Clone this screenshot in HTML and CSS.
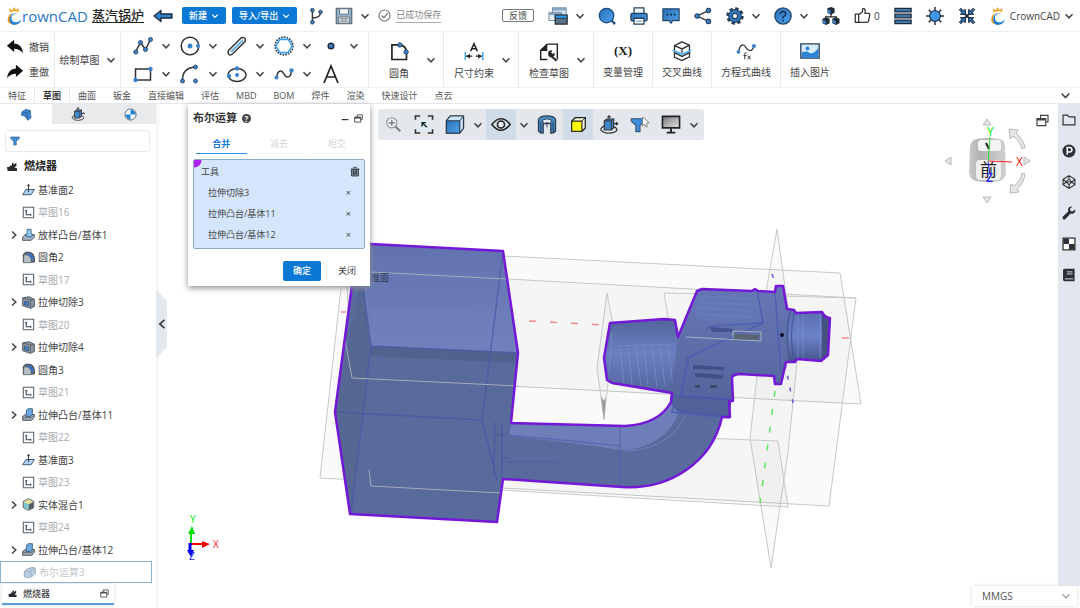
FILE: index.html
```html
<!DOCTYPE html>
<html lang="zh-CN">
<head>
<meta charset="utf-8">
<meta name="viewport" content="width=device-width, initial-scale=1">
<title>CrownCAD - 蒸汽锅炉</title>
<link rel="stylesheet" href="styles.css">
</head>
<body>
<svg class="sprite" width="0" height="0" aria-hidden="true">
  <defs>
    <linearGradient id="gb" x1="0" y1="0" x2="1" y2="1"><stop offset="0" stop-color="#2a6fb8"/><stop offset="1" stop-color="#4ea4ec"/></linearGradient>
    <linearGradient id="gm" x1="0" y1="0" x2="1" y2="1"><stop offset="0" stop-color="#777"/><stop offset="1" stop-color="#e4e4e4"/></linearGradient>
  </defs>
  <symbol id="chev" viewBox="0 0 10 10"><path d="M1.5 3.2 5 6.8l3.500-3.600" fill="none" stroke="currentColor" stroke-width="1.500"/></symbol>
  <symbol id="chevr" viewBox="0 0 10 10"><path d="M3 1.500 6.800 5 3 8.500" fill="none" stroke="currentColor" stroke-width="1.500"/></symbol>
  <symbol id="crown" viewBox="0 0 16 20"><path d="M3 6 2 1.500 5.500 3.500 7.500 0l2 3.300L13 1.500 12.500 5.500Q7 3.500 3 6Z" fill="#f5a52c"/><path d="M12 7Q3 5.500 3 12.500q.5 6.500 6 7Q-.5 20 .5 12.500 2 5 12 7Z" fill="#f59a23"/><path d="M11.500 7.500Q4.500 7 4.500 12.500 5 17 9.500 17q3.500 0 6-3-1.500 6-8 6Q2 19 2.500 12.500 4 6 11.500 7.500Z" fill="#1f7fd6"/></symbol>
  <symbol id="back" viewBox="0 0 20 20"><path d="M1 10 8 4.500V8h11v4H8v3.500Z" fill="#2c83d2" stroke="#1d2733" stroke-width="1.300" stroke-linejoin="round"/></symbol>
  <symbol id="branch" viewBox="0 0 20 20"><path d="M6 4v12M6 12q9 0 9-6" fill="none" stroke="#333" stroke-width="1.600"/><g fill="#3c82c8" stroke="#2b3a4d"><circle cx="6" cy="3.500" r="2"/><circle cx="6" cy="17" r="2"/><circle cx="15" cy="5.500" r="2"/></g></symbol>
  <symbol id="save" viewBox="0 0 20 20"><path d="M1.500 1.500h17v17h-17Z" fill="#8fb2cf" stroke="#66717c" stroke-width="1.600"/><path d="M5 2h10v6H5Z" fill="#eef3f7" stroke="#66717c"/><path d="M4 11h12v7H4Z" fill="#d8e0e6" stroke="#66717c"/><path d="M6 13h8M6 15.500h8" stroke="#66717c"/></symbol>
  <symbol id="check" viewBox="0 0 20 20"><circle cx="10" cy="10" r="8.500" fill="none" stroke="#6d747b" stroke-width="1.700"/><path d="m5.500 10 3.500 3.500 6-7" fill="none" stroke="#6d747b" stroke-width="1.800"/></symbol>
  <symbol id="windows" viewBox="0 0 22 20"><path d="M5 1h15v11H5Z" fill="#d9e6f0" stroke="#68839b"/><path d="M5 1h15v3H5Z" fill="#86a6c3"/><path d="M1 6h14v9H1Z" fill="#e6eef4" stroke="#68839b"/><path d="M1 6h14v3H1Z" fill="#86a6c3"/><path d="M8 9h13v10H8Z" fill="#5d7186" stroke="#27313b" stroke-width="1.500"/><path d="M8 9h13v3.500H8Z" fill="#2f9af0" stroke="#27313b"/></symbol>
  <symbol id="search" viewBox="0 0 20 20"><path d="m15 15 4 4" stroke="#1f4e80" stroke-width="2.500"/><circle cx="9.500" cy="9.500" r="8" fill="url(#gb)" stroke="#1f4e80" stroke-width="1.500"/></symbol>
  <symbol id="print" viewBox="0 0 20 20"><path d="M4.500 1h11v7h-11Z" fill="#eef6fc" stroke="#274059" stroke-width="1.400"/><rect x="1" y="7" width="18" height="8.500" rx="1.500" fill="url(#gb)" stroke="#274059" stroke-width="1.400"/><path d="M4.500 12.500h11V19h-11Z" fill="#fff" stroke="#274059" stroke-width="1.400"/><path d="M6.500 15.700h7" stroke="#3c82c8"/></symbol>
  <symbol id="chat" viewBox="0 0 20 20"><path d="M1 2h18v13h-7l-2 3-2-3H1Z" fill="url(#gb)" stroke="#274a70" stroke-width="1.400"/><path d="M5 8.500h2m2 0h2m2 0h2" stroke="#0e2a48" stroke-width="1.800"/></symbol>
  <symbol id="share" viewBox="0 0 20 20"><path d="M16 4 3.500 10 16 16" fill="none" stroke="#333" stroke-width="1.500"/><g fill="#3c82c8" stroke="#24405e" stroke-width="1.200"><circle cx="16" cy="4" r="2.500"/><circle cx="3.500" cy="10" r="2.500"/><circle cx="16" cy="16" r="2.500"/></g></symbol>
  <symbol id="gear" viewBox="0 0 20 20"><circle cx="10" cy="10" r="8" fill="none" stroke="#263f5a" stroke-width="3.400" stroke-dasharray="3.600 2.683"/><circle cx="10" cy="10" r="7" fill="#2f7fc9" stroke="#263f5a" stroke-width="1.300"/><circle cx="10" cy="10" r="3" fill="#fff" stroke="#263f5a" stroke-width="1.500"/></symbol>
  <symbol id="help" viewBox="0 0 20 20"><circle cx="10" cy="10" r="9" fill="url(#gb)" stroke="#274a70" stroke-width="1.600"/><path d="M7 8q0-3 3-3t3 2.700Q13 9.500 10 11v1.500M10 14v2" fill="none" stroke="#173659" stroke-width="1.700"/></symbol>
  <symbol id="net" viewBox="0 0 20 20"><path d="M10 7v4M4 14v-3h12v3" fill="none" stroke="#222" stroke-width="1.300"/><g fill="#1e2b38"><path d="m10 0 4 1.500v5L10 8.500l-4-2v-5Z"/><path d="m4.500 11.500 4 1.500v5l-4 2-4-2v-5Z"/><path d="m15.500 11.500 4 1.500v5l-4 2-4-2v-5Z"/></g><path d="m6.500 3 3 1v3.500l-3-1.500ZM1 14.500l3 1V19l-3-1.500Zm11 0 3 1V19l-3-1.500Z" fill="#3f8fdc"/></symbol>
  <symbol id="like" viewBox="0 0 20 20"><path d="M1.500 8.500h4V18h-4ZM5.500 9 10 5.500V2.200q2.800-1 3.300 1.800l-.5 3.500h4.500q1.700.5 1.200 2L17 17q-.5 1-2 1H5.500" fill="none" stroke="#333" stroke-width="1.500" stroke-linejoin="round"/></symbol>
  <symbol id="list" viewBox="0 0 20 20"><g fill="#3b75ae" stroke="#1d2a38" stroke-width="1.400"><path d="M1 1.500h18v4H1ZM1 8h18v4H1ZM1 14.500h18v4H1Z"/></g></symbol>
  <symbol id="sun" viewBox="0 0 20 20"><path d="M10 0v20M0 10h20M3 3l14 14M17 3 3 17" stroke="#27313b" stroke-width="1.700"/><circle cx="10" cy="10" r="6" fill="#3f97e8" stroke="#274059" stroke-width="1.400"/></symbol>
  <symbol id="shrink" viewBox="0 0 20 20"><path d="m3 3 14 14M17 3 3 17" stroke="#1c2732" stroke-width="2"/><g fill="#2f6fb0" stroke="#1c2732" stroke-width="1.100" stroke-linejoin="round"><path d="M8.500 8.500 2.500 8 4.500 6.500 1.500 3 3 1.500l3.500 3L8 2.500Z"/><path d="m11.500 8.500 6-.5-2-1.500 3-3.500L17 1.500l-3.500 3-1.500-2Z"/><path d="m8.500 11.500-6 .5 2 1.500-3 3.500L3 18.500l3.500-3 1.500 2Z"/><path d="m11.500 11.500 6 .5-2 1.500 3 3.500-1.500 1.500-3.500-3-1.500 2Z"/></g></symbol>
  <symbol id="undo" viewBox="0 0 20 20"><path d="M1 8.500 9 2v4q9 .5 10 11-4-5-10-5v3.500Z" fill="#111"/></symbol>
  <symbol id="redo" viewBox="0 0 20 20"><path d="M19 8.500 11 2v4Q2 6.500 1 17q4-5 10-5v3.500Z" fill="#111"/></symbol>
  <symbol id="poly" viewBox="0 0 20 20"><path d="m2.500 16 5-9.500 5 7 5-10" fill="none" stroke="#333" stroke-width="1.500"/><g fill="#3c82c8" stroke="#24405e" stroke-width=".8"><circle cx="2.800" cy="16" r="2.100"/><circle cx="7.500" cy="6.500" r="2.100"/><circle cx="12.500" cy="13.500" r="2.100"/><circle cx="17.500" cy="3.500" r="2.100"/></g></symbol>
  <symbol id="circ" viewBox="0 0 20 20"><circle cx="10" cy="10" r="8.800" fill="none" stroke="#333" stroke-width="1.500"/><circle cx="10" cy="10" r="2.500" fill="#3c82c8"/><circle cx="18" cy="10" r="2" fill="#3c82c8"/></symbol>
  <symbol id="slot" viewBox="0 0 20 20"><path d="M1.500 14.500 14 2q2-1.200 3.500 0t.5 3.500L5.500 18q-2 1.500-3.500.5t-.5-4Z" fill="#fff" stroke="#333" stroke-width="1.500"/><path d="M4 16 16 4" stroke="#61b3ee" stroke-width="2"/></symbol>
  <symbol id="hex" viewBox="0 0 20 20"><circle cx="10" cy="10" r="9" fill="#a7d5f7" stroke="#333" stroke-width="1.500" stroke-dasharray="1.500 1.300"/><path d="M6 3.500h8l4 6.500-4 6.500H6L2 10Z" fill="#fff" stroke="#3d9ee8" stroke-width="1.300"/></symbol>
  <symbol id="dot" viewBox="0 0 20 20"><circle cx="10" cy="10" r="2.800" fill="#3c82c8" stroke="#1d2d3d" stroke-width="1.500"/></symbol>
  <symbol id="rect" viewBox="0 0 20 20"><path d="M2.500 5h15v11h-15Z" fill="#fff" stroke="#333" stroke-width="1.500"/><circle cx="17.500" cy="5" r="2.200" fill="#3c82c8"/><circle cx="2.500" cy="16" r="2.200" fill="#3c82c8"/></symbol>
  <symbol id="arc" viewBox="0 0 20 20"><path d="M2.500 17Q2 4 15 3" fill="none" stroke="#333" stroke-width="1.500"/><g fill="#3c82c8" stroke="#24405e" stroke-width=".8"><circle cx="2.500" cy="17" r="2"/><circle cx="15.500" cy="3" r="2"/><circle cx="15.500" cy="17" r="2"/></g></symbol>
  <symbol id="ell" viewBox="0 0 20 20"><ellipse cx="10" cy="11" rx="9" ry="6.500" fill="none" stroke="#333" stroke-width="1.500"/><g fill="#3c82c8"><circle cx="10" cy="11" r="2"/><circle cx="10" cy="4.500" r="2.200"/><circle cx="2" cy="12" r="2.200"/></g></symbol>
  <symbol id="spl" viewBox="0 0 20 20"><path d="M2.500 13.500C4 5 8 6 10 10s6.500 5 7.500-3" fill="none" stroke="#333" stroke-width="1.500"/><circle cx="2.500" cy="13.500" r="2" fill="#3c82c8"/><circle cx="17.500" cy="6.500" r="2.200" fill="#3c82c8"/></symbol>
  <symbol id="txt" viewBox="0 0 20 20"><path d="M3 19 10 2l7 17M5.500 13h9" fill="none" stroke="#222" stroke-width="1.700"/></symbol>
  <symbol id="fil" viewBox="0 0 24 24"><path d="M3.500 3.500H13q7.500 1 8 8.500v9H3.500Z" fill="#fff" stroke="#222" stroke-width="2"/><circle cx="13" cy="3.500" r="2.700" fill="#3c82c8" stroke="#24405e"/><circle cx="20.500" cy="12" r="2.700" fill="#3c82c8" stroke="#24405e"/></symbol>
  <symbol id="dim" viewBox="0 0 24 24"><path d="m8 11 4-9 4 9M9.500 8h5" fill="none" stroke="#222" stroke-width="1.800"/><path d="M2 17h20" stroke="#222" stroke-width="1.500" stroke-dasharray="8 4"/><path d="m3 17 4-3v6ZM21 17l-4-3v6Z" fill="#222"/><path d="M1.500 12v10M22.500 12v10" stroke="#48aef0" stroke-width="1.800"/></symbol>
  <symbol id="chk" viewBox="0 0 24 24"><path d="M10 2.500h12V21M10 2.500 2 10v11h8M2 10h8Z" fill="none" stroke="#222" stroke-width="1.700"/><path d="M10 2v8H2Z" fill="#222"/><path d="M11 14q0-4 4-4l1 .5-1.500 2 2 2 2-1.500q1.500 3-1.500 4.500l5 4-2 2-5-5q-4 0-4-4.500Z" fill="#222"/></symbol>
  <symbol id="iso" viewBox="0 0 24 24"><path d="m12 1 9 4v14l-9 4.500-9-4V5.500ZM3 5.500l9 4 9-4.500M12 9.500V14M3 14l9 4.500 9-4.500" fill="none" stroke="#333" stroke-width="1.600"/><path d="m1 11 11 5L23 11" fill="none" stroke="#48aef0" stroke-width="2"/></symbol>
  <symbol id="wave" viewBox="0 0 24 24"><path d="M3 13C5 3 9 3 12 8s8 5 9.500-2" fill="none" stroke="#333" stroke-width="1.500"/><circle cx="3" cy="13" r="2.300" fill="#3c82c8"/><circle cx="21.500" cy="6" r="2.500" fill="#3c82c8"/><path d="M12.500 14q-2-.5-2 2v6M9 17.500h3.500M14 17.500l3.500 4.500m0-4.500L14 22" fill="none" stroke="#333" stroke-width="1.200"/></symbol>
  <symbol id="pic" viewBox="0 0 24 24"><path d="M1 3.500h22v17H1Z" fill="#d8ecfb" stroke="#274059" stroke-width="1.600"/><path d="M2 14q5-3 9 0 5 3 11-6v12H2Z" fill="#2f83d6"/><circle cx="9" cy="9" r="2.300" fill="#2f83d6"/></symbol>
  <symbol id="part" viewBox="0 0 20 20"><path d="m3 6 6-4 7 2 1 11-5 4-4-6-6-2Z" fill="#3a86cf" stroke="#2c5f92"/><path d="m3 6 7 2 6-4M10 8l2 10" fill="none" stroke="#23507e"/></symbol>
  <symbol id="rot" viewBox="0 0 24 24"><path d="M6 7.500 9 5h9v11l-3 3H6Z" fill="#3f86c6" stroke="#333" stroke-width="1.400"/><path d="M6 7.500h9V19M15 7.500 18 5" fill="none" stroke="#333" stroke-width="1.200"/><path d="M12 5V1m-2 2 2-2 2 2M18 11h5m-2-2 2 2-2 2M6 14q-5 2-4 5 3 4 11 4 8-1 9-4 0-3-4-4" fill="none" stroke="#333" stroke-width="1.500"/></symbol>
  <symbol id="bmw" viewBox="0 0 20 20"><circle cx="10" cy="10" r="8.500" fill="#fff" stroke="#49637d" stroke-width="1.500"/><path d="M10 10V2.500A7.500 7.500 0 0 1 17.500 10ZM10 10v7.500A7.500 7.500 0 0 1 2.500 10Z" fill="#2383d8"/></symbol>
  <symbol id="funnel" viewBox="0 0 20 20"><path d="M1.500 2h17v3l-6 5.500V18h-5v-7.500l-6-5.500Z" fill="#3d8fdb" stroke="#345577" stroke-width="1.300"/></symbol>
  <symbol id="root" viewBox="0 0 20 20"><path d="M1 11h4l2-3h3V4l3-1v4l5-4v6l-4 3 5 1v5H2Z" fill="#26292d"/></symbol>
  <symbol id="plane" viewBox="0 0 20 20"><path d="M6 10h13l-5 8H1Z" fill="#a9d2f2" stroke="#3b5268" stroke-width="1.400"/><path d="M10 14V3M8 5l2-3 2 3" fill="none" stroke="#333" stroke-width="1.400"/></symbol>
  <symbol id="sketch" viewBox="0 0 20 20"><path d="M2 2h16v16H2Z" fill="#fff" stroke="#56606b" stroke-width="1.600"/><path d="M6.500 6v7.500H14M5 7h3m5.500 5v3" fill="none" stroke="#3b4650" stroke-width="1.700"/></symbol>
  <symbol id="boss" viewBox="0 0 20 20"><path d="m1 13 4-3h14v4l-4 5H1Z" fill="#a5aeb8" stroke="#3a4653" stroke-width="1.300"/><path d="M7 3 9.500 1H16v9l-3 3H6Z" fill="#6ba6dc" stroke="#365878" stroke-width="1.300"/><path d="M2 15h12l4-4" fill="none" stroke="#3a4653"/></symbol>
  <symbol id="loft" viewBox="0 0 20 20"><path d="m1 14 4-4h14v4l-5 5H1Z" fill="#a5b4c2" stroke="#3a4653" stroke-width="1.300"/><path d="M8 2h6v5q0 3 3 4l-4 3-8-2q3-2 3-5Z" fill="#8cc7ef" stroke="#365878" stroke-width="1.300"/></symbol>
  <symbol id="fillet" viewBox="0 0 20 20"><path d="M2 5 6 2h6q6 1 7 8v7H2Z" fill="#6c7784" stroke="#2b3540" stroke-width="1.400"/><path d="M9 3q8 1 9 10h-4q0-7-8-8Z" fill="#2e70d0"/><path d="M2.500 6H8q5 1 6 7v5H2.500Z" fill="#b8c0c8" stroke="#4b5662"/></symbol>
  <symbol id="cut" viewBox="0 0 20 20"><path d="m1 3 10-2 8 4v11l-6 3-12-4Z" fill="#8b95a0" stroke="#444e59" stroke-width="1.300"/><path d="m1 3 12 3v13M13 6l6-1" fill="none" stroke="#444e59"/><path d="m4 8 6 1.500v5.500l-6-1.500Z" fill="#3e86d0" stroke="#24435f"/></symbol>
  <symbol id="mix" viewBox="0 0 20 20"><path d="m10 1 8 4v10l-8 4-8-4V5Z" fill="#eadf9e" stroke="#4a5560" stroke-width="1.400"/><path d="m10 10 7-4v9l-7 3Z" fill="#4f5d69"/><path d="m3 6 7 4v8l-7-3Z" fill="#78c8d8"/></symbol>
  <symbol id="bool" viewBox="0 0 20 20"><path d="m2 9 5-5 9-2 3 2v7l-6 6-8 1-3-2Z" fill="#b8cfe6" stroke="#90a0b0" stroke-width="1.300"/><path d="m2 9 10-1 6-5M12 8l1 8" fill="none" stroke="#90a0b0"/></symbol>
  <symbol id="restore" viewBox="0 0 20 20"><path d="M7 7V2h11.500v10H15M1.500 7H15v11H1.500Z" fill="none" stroke="currentColor" stroke-width="1.800"/><path d="M1.500 8.500H15" stroke="currentColor" stroke-width="3"/></symbol>
  <symbol id="trash" viewBox="0 0 20 20"><path d="M3 6h14v13H3Z" fill="#7c8997" stroke="#252c34" stroke-width="1.500"/><path d="M1 5h18M7 4V1.500h6V4M7 8v9m3-9v9m3-9v9" fill="none" stroke="#252c34" stroke-width="1.500"/></symbol>
  <symbol id="zoom" viewBox="0 0 20 20"><circle cx="8" cy="8" r="6" fill="#edf1f5" stroke="#8b939b" stroke-width="1.300"/><path d="m12 12 6 6" stroke="#7a828a" stroke-width="2.400"/><path d="M8 4.500v7M4.500 8h7" stroke="#6b737b" stroke-width="1.500"/></symbol>
  <symbol id="fit" viewBox="0 0 20 20"><path d="M1 5V1h5m8 0h5v4M1 15v4h5m8 0h5v-4" fill="none" stroke="#333" stroke-width="1.700"/><path d="M5 4h10v12H5Z" fill="#dcecf8"/><path d="m13 13-5-5m0 4V8h4" fill="none" stroke="#222" stroke-width="1.500"/></symbol>
  <symbol id="cube" viewBox="0 0 20 20"><path d="m1 6 4-5h14v13l-4 5H1Z" fill="#cde5f6" stroke="#2b3a4d" stroke-width="1.400"/><path d="M1 6h14v13H1Z" fill="url(#gb)" stroke="#2b3a4d" stroke-width="1.200"/><path d="m15 6 4-5" stroke="#2b3a4d"/></symbol>
  <symbol id="ycube" viewBox="0 0 20 20"><path d="m2 6 4-4h12v12l-4 4H2Z" fill="#f4f4d8" stroke="#222" stroke-width="1.500"/><path d="M2 6h12v12H2Z" fill="#ff0" stroke="#222" stroke-width="1.300"/><path d="m14 6 4-4" stroke="#222"/></symbol>
  <symbol id="eye" viewBox="0 0 20 14"><path d="M.8 7Q10-4.500 19.200 7 10 18.500.8 7Z" fill="none" stroke="#222" stroke-width="1.500"/><circle cx="10" cy="7" r="3.500" fill="#eef3f7" stroke="#222" stroke-width="1.600"/></symbol>
  <symbol id="ring" viewBox="0 0 20 20"><path d="M1 5Q2 1 10 1t9 4v12q-2 2.500-5 2V9.500q-4-1.500-8 0V19q-3 .5-5-2Z" fill="#468dc9" stroke="#2b3a4d" stroke-width="1.300"/><path d="M5 5.500Q10 2.500 15 5.500L13.500 9q-3.500-1.500-7 0Z" fill="#e2edf5" stroke="#2b3a4d"/><path d="M3.500 7v11M16.500 7v11M10 8v5" stroke="#2b3a4d"/></symbol>
  <symbol id="fcur" viewBox="0 0 24 20"><path d="M1.500 3h16v3l-5.500 5v7.500H7V11L1.500 6Z" fill="#3d8fdb" stroke="#345577" stroke-width="1.300"/><path d="m15 1 8 7-3.500.5 1.500 4-2 .5-1.500-3.500L15 12Z" fill="#fff" stroke="#777"/></symbol>
  <symbol id="mon" viewBox="0 0 20 20"><path d="M1 1.500h18v12H1Z" fill="url(#gm)" stroke="#222" stroke-width="1.700"/><path d="M10 14v4M5.500 18.500h9" stroke="#222" stroke-width="2"/></symbol>
  <symbol id="folder" viewBox="0 0 20 20"><path d="M1.500 3h6.500l2 2.500h8.500V17h-17Z" fill="none" stroke="#333" stroke-width="1.700" stroke-linejoin="round"/></symbol>
  <symbol id="park" viewBox="0 0 20 20"><circle cx="10" cy="10" r="9.300" fill="#2c3036"/><path d="M7.500 15.500V5h3.700q3 .3 3 3.200t-3 3.200H7.500" fill="none" stroke="#fff" stroke-width="2.200"/></symbol>
  <symbol id="poly3" viewBox="0 0 20 20"><path d="m10 1 8.500 5v8L10 19l-8.500-5V6ZM10 1v5M10 14v5M1.500 6 6 10l-4.500 4M18.500 6 14 10l4.500 4M10 6l4 4-4 4-4-4Zm-4 4h8" fill="none" stroke="#333" stroke-width="1.500"/></symbol>
  <symbol id="wrench" viewBox="0 0 20 20"><path d="M18.500 5 15 8l-3-1-.5-3L15 .8Q9.500.3 8.500 5l.3 3L1 15.500Q0 18 2 19.200q1.800.6 3-.7l7-7.500q6 .5 7-4Z" fill="#2c3036"/></symbol>
  <symbol id="checker" viewBox="0 0 20 20"><path d="M1.500 1.500h17v17h-17Z" fill="#fff" stroke="#333" stroke-width="1.800"/><path d="M2 2h8v8H2ZM10 10h8v8h-8Z" fill="#2c3036"/></symbol>
  <symbol id="book" viewBox="0 0 20 20"><path d="M4 1h14v18H4q-3 0-2.500-4V3Q2 1 4 1Z" fill="#2c3036"/><path d="M7 5.500h8M7 8.500h8M4 15.500h12" fill="none" stroke="#e2e6ee" stroke-width="1.300"/></symbol>
</svg>

<div class="app">
  <header class="topbar">
    <div class="topbar-left">
      <a class="brand" href="#" aria-label="CrownCAD"><svg class="brand-mark"><use href="#crown"/></svg><span>rownCAD</span></a>
      <h1 class="doc-title">蒸汽锅炉</h1>
      <button class="ib ib-wide" aria-label="返回"><svg><use href="#back"/></svg></button>
      <div class="primary-group">
        <button class="primary">新建<svg class="chev"><use href="#chev"/></svg></button>
        <button class="primary">导入/导出<svg class="chev"><use href="#chev"/></svg></button>
      </div>
      <button class="ib ib-branch" aria-label="分支"><svg><use href="#branch"/></svg></button>
      <div class="pair"><button class="ib" aria-label="保存"><svg><use href="#save"/></svg></button><button class="cb" aria-label="保存选项"><svg class="chev"><use href="#chev"/></svg></button></div>
      <div class="saved"><svg><use href="#check"/></svg><span>已成功保存</span></div>
    </div>
    <div class="topbar-right">
      <button class="feedback">反馈</button>
      <div class="pair"><button class="ib ib-wide" aria-label="窗口"><svg><use href="#windows"/></svg></button><button class="cb" aria-label="窗口选项"><svg class="chev"><use href="#chev"/></svg></button></div>
      <button class="ib" aria-label="搜索"><svg><use href="#search"/></svg></button>
      <button class="ib" aria-label="打印"><svg><use href="#print"/></svg></button>
      <button class="ib" aria-label="消息"><svg><use href="#chat"/></svg></button>
      <button class="ib" aria-label="分享"><svg><use href="#share"/></svg></button>
      <div class="pair"><button class="ib" aria-label="设置"><svg><use href="#gear"/></svg></button><button class="cb" aria-label="设置选项"><svg class="chev"><use href="#chev"/></svg></button></div>
      <div class="pair"><button class="ib" aria-label="帮助"><svg><use href="#help"/></svg></button><button class="cb" aria-label="帮助选项"><svg class="chev"><use href="#chev"/></svg></button></div>
      <button class="ib" aria-label="结构"><svg><use href="#net"/></svg></button>
      <button class="like" aria-label="点赞"><svg><use href="#like"/></svg><span>0</span></button>
      <button class="ib" aria-label="列表"><svg><use href="#list"/></svg></button>
      <button class="ib" aria-label="主题"><svg><use href="#sun"/></svg></button>
      <button class="ib" aria-label="收缩"><svg><use href="#shrink"/></svg></button>
      <button class="user"><svg class="user-mark"><use href="#crown"/></svg>CrownCAD<svg class="chev"><use href="#chev"/></svg></button>
    </div>
  </header>

  <div class="ribbon">
    <div class="history">
      <button><svg><use href="#undo"/></svg>撤销</button>
      <button><svg><use href="#redo"/></svg>重做</button>
    </div>
    <button class="draw-sketch">绘制草图<svg class="chev"><use href="#chev"/></svg></button>
    <div class="tools">
      <div class="tool"><button aria-label="折线"><svg><use href="#poly"/></svg></button><button class="cb" aria-label="折线选项"><svg class="chev"><use href="#chev"/></svg></button></div>
      <div class="tool"><button aria-label="圆"><svg><use href="#circ"/></svg></button><button class="cb" aria-label="圆选项"><svg class="chev"><use href="#chev"/></svg></button></div>
      <div class="tool"><button aria-label="槽口"><svg><use href="#slot"/></svg></button><button class="cb" aria-label="槽口选项"><svg class="chev"><use href="#chev"/></svg></button></div>
      <div class="tool"><button aria-label="多边形"><svg><use href="#hex"/></svg></button><button class="cb" aria-label="多边形选项"><svg class="chev"><use href="#chev"/></svg></button></div>
      <div class="tool"><button aria-label="点"><svg><use href="#dot"/></svg></button><button class="cb" aria-label="点选项"><svg class="chev"><use href="#chev"/></svg></button></div>
      <div class="tool"><button aria-label="矩形"><svg><use href="#rect"/></svg></button><button class="cb" aria-label="矩形选项"><svg class="chev"><use href="#chev"/></svg></button></div>
      <div class="tool"><button aria-label="圆弧"><svg><use href="#arc"/></svg></button><button class="cb" aria-label="圆弧选项"><svg class="chev"><use href="#chev"/></svg></button></div>
      <div class="tool"><button aria-label="椭圆"><svg><use href="#ell"/></svg></button><button class="cb" aria-label="椭圆选项"><svg class="chev"><use href="#chev"/></svg></button></div>
      <div class="tool"><button aria-label="样条"><svg><use href="#spl"/></svg></button><button class="cb" aria-label="样条选项"><svg class="chev"><use href="#chev"/></svg></button></div>
      <div class="tool"><button aria-label="文字"><svg><use href="#txt"/></svg></button></div>
    </div>
    <div class="cmd cmd-menu"><button class="cmd-btn"><svg><use href="#fil"/></svg>圆角</button><button class="cb" aria-label="圆角选项"><svg class="chev"><use href="#chev"/></svg></button></div>
    <div class="cmd cmd-menu"><button class="cmd-btn"><svg><use href="#dim"/></svg>尺寸约束</button><button class="cb" aria-label="尺寸约束选项"><svg class="chev"><use href="#chev"/></svg></button></div>
    <div class="cmd cmd-menu"><button class="cmd-btn"><svg><use href="#chk"/></svg>检查草图</button><button class="cb" aria-label="检查草图选项"><svg class="chev"><use href="#chev"/></svg></button></div>
    <div class="cmd"><button class="cmd-btn"><span class="var-mark">(X)</span>变量管理</button></div>
    <div class="cmd"><button class="cmd-btn"><svg><use href="#iso"/></svg>交叉曲线</button></div>
    <div class="cmd"><button class="cmd-btn"><svg><use href="#wave"/></svg>方程式曲线</button></div>
    <div class="cmd cmd-last"><button class="cmd-btn"><svg><use href="#pic"/></svg>插入图片</button></div>
  </div>

  <nav class="tabs">
    <button>特征</button><button class="on">草图</button><button>曲面</button><button>钣金</button><button>直接编辑</button><button>评估</button><button>MBD</button><button>BOM</button><button>焊件</button><button>渲染</button><button>快速设计</button><button>点云</button>
    <button class="fold" aria-label="折叠"><svg class="chev"><use href="#chev"/></svg></button>
  </nav>

  <main class="workspace">
    <aside class="side">
      <div class="side-tabs">
        <button class="on" aria-label="特征树"><svg><use href="#part"/></svg></button>
        <button aria-label="视图"><svg class="lg"><use href="#rot"/></svg></button>
        <button aria-label="外观"><svg><use href="#bmw"/></svg></button>
      </div>
      <label class="filter"><svg><use href="#funnel"/></svg><input type="text" aria-label="筛选"></label>
      <div class="root"><svg><use href="#root"/></svg>燃烧器</div>
      <ul class="tree">
        <li><svg><use href="#plane"/></svg>基准面2</li>
        <li class="dim"><svg><use href="#sketch"/></svg>草图16</li>
        <li><button aria-label="展开"><svg><use href="#chevr"/></svg></button><svg><use href="#loft"/></svg>放样凸台/基体1</li>
        <li><svg><use href="#fillet"/></svg>圆角2</li>
        <li class="dim"><svg><use href="#sketch"/></svg>草图17</li>
        <li><button aria-label="展开"><svg><use href="#chevr"/></svg></button><svg><use href="#cut"/></svg>拉伸切除3</li>
        <li class="dim"><svg><use href="#sketch"/></svg>草图20</li>
        <li><button aria-label="展开"><svg><use href="#chevr"/></svg></button><svg><use href="#cut"/></svg>拉伸切除4</li>
        <li><svg><use href="#fillet"/></svg>圆角3</li>
        <li class="dim"><svg><use href="#sketch"/></svg>草图21</li>
        <li><button aria-label="展开"><svg><use href="#chevr"/></svg></button><svg><use href="#boss"/></svg>拉伸凸台/基体11</li>
        <li class="dim"><svg><use href="#sketch"/></svg>草图22</li>
        <li><svg><use href="#plane"/></svg>基准面3</li>
        <li class="dim"><svg><use href="#sketch"/></svg>草图23</li>
        <li><button aria-label="展开"><svg><use href="#chevr"/></svg></button><svg><use href="#mix"/></svg>实体混合1</li>
        <li class="dim"><svg><use href="#sketch"/></svg>草图24</li>
        <li><button aria-label="展开"><svg><use href="#chevr"/></svg></button><svg><use href="#boss"/></svg>拉伸凸台/基体12</li>
        <li class="picked"><svg><use href="#bool"/></svg>布尔运算3</li>
      </ul>
      <button class="doc-tab"><svg><use href="#root"/></svg>燃烧器<svg class="doc-restore"><use href="#restore"/></svg></button>
    </aside>

    <section class="viewport">
      <svg class="scene" viewBox="156 104 902 504" role="img" aria-label="燃烧器模型">
        <defs>
          <linearGradient id="face" x1="0" y1="0" x2="0" y2="1"><stop offset="0" stop-color="#6272ae"/><stop offset="1" stop-color="#7082be"/></linearGradient>
          <linearGradient id="head" x1="0" y1="0" x2="0" y2="1"><stop offset="0" stop-color="#6677b5"/><stop offset=".6" stop-color="#5a6ba5"/><stop offset="1" stop-color="#51629a"/></linearGradient>
          <linearGradient id="cone" x1="0" y1="0" x2="0" y2="1"><stop offset="0" stop-color="#52649c"/><stop offset=".45" stop-color="#6b7fc0"/><stop offset="1" stop-color="#53659f"/></linearGradient>
          <linearGradient id="nose" x1="0" y1="0" x2="0" y2="1"><stop offset="0" stop-color="#5a6db0"/><stop offset=".5" stop-color="#6c82c8"/><stop offset="1" stop-color="#46558c"/></linearGradient>
          <linearGradient id="viewcube" x1="0" y1="0" x2="1" y2="0"><stop offset="0" stop-color="#c9c9c9"/><stop offset=".3" stop-color="#b2b2b2"/><stop offset="1" stop-color="#d0d0d0"/></linearGradient>
          <path id="hull" d="m371 244 132 7 15 102-7 70 114 3Q659 424 671 402l1-9-60-10-5-3-3-22 6-35 54-4 11 1 3 17 19-46 5-2 50 2 3-2 3 2 17 1 1-6h7l4 23 7 1 2 3 26-1 3 5 5 1-2 37-7 6-24-2-2 3h-9l-5 22h-6l-1-8-34-2q-8 0-8 4l1 23h-4l1 16h-8C712 462 670 490 622 487l-119-8-6 43-147-8-15-102 17-127 3-42Z"/>
        </defs>
        <g fill="#777" fill-opacity=".035" stroke="#c6c9c6" stroke-width="1">
          <path d="M345 248 840 273l21 131L352 378Z"/>
          <path d="m343 270 513 28-27 208-509-28Z"/>
          <path d="m664 293 192 5M664 293l10 60"/>
          <path d="m777 229 10 73 10 60-9 90-17 116-21-130 7-62 10-90Z"/>
          <path d="m500 430 278 11 10 66-288-17Z"/>
          <path d="m607 293-10 75 7 52 10-90Z"/>
        </g>
        <path d="m500 425 125 3Q659 424 671 402l1-9-60-10Z" fill="none"/>
        <path d="m604 420-3-24 3 5 2-5Z" fill="#999"/>
        <g fill="none" stroke-width="1.500">
          <path d="m529 321 75 4" stroke="#f38b8b" stroke-dasharray="7 14"/><path d="M341 312h5m496 26h7" stroke="#f38b8b"/>
          <path d="m775 391-15 112" stroke="#5ce65c" stroke-dasharray="6 12"/>
          <path d="m772 274 2 5m11 85 8 39" stroke="#5a5ae0" stroke-dasharray="4 8"/>
        </g>
        <use href="#hull" fill="#596a9d"/>
        <path d="M496 424 625 426Q659 424 671 402l9 8Q668 444 628 450L496 434Z" fill="#6d7eb9"/>
        <path d="M570 441 628 451q46-3 60-42" fill="none" stroke="#7080ba"/>
        <path d="M496 434q70 6 124 12M620 427v60M498 462h60" fill="none" stroke="#4b5cab" stroke-width="1.200" opacity=".7"/>
        <path d="m351 243 152 8 15 102-7 70-8 56-6 43-147-8-15-102 16-126Z" fill="#596a9d"/>
        <path d="m356 243 147 8 15 102-147-7Z" fill="url(#face)"/>
        <path d="m370 308 143 4 5 41-147-7Z" fill="#6f80bd" opacity=".8"/>
        <path d="m362 272 8 74-9 76-10 92-16-102Z" fill="#55668f" opacity=".7"/>
        <path d="m371 346 147 7-1 10-147-7Z" fill="#51628f"/>
        <path d="m361 272 10 74-9 75-11 92m20-167 147 7M335 412l147 8 15 60m6-229-21 169m13 2-1 52m8-52v56m-2-20h10m-14-23h9" fill="none" stroke="#4658a4" stroke-width="1.500" opacity=".7"/>
        <path d="m371 272 135 7M345 340l7 38 166 8M369 470l2 16 129 7" fill="none" stroke="#a5adb5" stroke-width="1"/>
        <text class="plane-label" x="362" y="281">基准面</text>
        <path d="m610 323 54-4 11 1 3 17v55l-4 1-62-10-5-3-3-22Z" fill="url(#cone)"/>
        <path d="m620 349 4 34m4-34 4 36m4-37 5 38m3-38 4 39m4-41 5 41m3-42 5 41m3-42 5 42M612 332l-3 40" fill="none" stroke="#8596cf" opacity=".5"/>
        <path d="m614 346 60-2" stroke="#7386c2"/>
        <path d="m678 337 19-46 5-2 50 2h6l17 2 1-7h7l4 23 7 1-9 52-4 22-6-1-1-7-34-2-8 4 1 23-4 0 1 16-53-6-7-9Z" fill="url(#head)"/>
        <path d="m702 290 50 2 8 8 1 22-20 1-42-3-7-4Z" fill="#6475b3"/>
        <path d="m700 296 56 3m-58 3 56 3m-58 3 57 3m-58 3 57 3" stroke="#7183c0" stroke-width="2" opacity=".4"/>
        <path d="m757 290 6 33-74 34-9 39 52 3m-55-3-5 16 58 6M688 357l-8 45m82-79-51 3-4 3M775 292l6 80" fill="none" stroke="#4a5ab5" stroke-width="1.500" opacity=".8"/>
        <path d="m710 327 24 2-2 3h-20Z" fill="#43548e"/><path d="m693 365 31 2v3l-31-1Zm2 8 28 2v4l-28-2Z" fill="#3f5085"/><path d="M695 385h5v3h-5m15-3h7v3h-7" fill="#3e4a6b"/>
        <path d="m686 337 75 4v-9l-28-1v7" fill="none" stroke="#a9b0ba"/><path d="m734 334 25 1v5l-25-1Z" fill="#596472"/>
        <path d="m674 396 57 4-2 16-51-5-7-8Z" fill="#51629a" stroke="#4658a4"/>
        <path d="m790 310 6 3 26-1 3 5 5 1-2 37-7 6-24-2-4 3-5-1Z" fill="url(#nose)"/><path d="m822 312 8 6-2 37-6 5Z" fill="#43527f"/><path d="M798 314v44m5-44v44m17-43v43" stroke="#8496d0" opacity=".6"/>
        <path d="M790 312q-6 24 0 48M794 312q-5 24 0 49" fill="none" stroke="#43538c"/>
        <circle cx="782" cy="335" r="2" fill="#080c24"/>
        <use href="#hull" fill="none" stroke="#7418d8" stroke-width="2.500" stroke-linejoin="round"/>
        <g stroke-width="2"><path d="M191 544V532" stroke="#0d0"/><path d="m188 534 4-8 3 8Z" fill="#0d0"/><path d="M191 544h12" stroke="#e00"/><path d="m202 541 8 3-8 4Z" fill="#e00"/><path d="M190 543v10" stroke="#00e" stroke-width="3"/><path d="m187 550 4 7 3-7Z" fill="#00e"/></g>
        <g class="axis"><text x="190" y="523" fill="#0e0">Y</text><text x="213" y="548" fill="#f11">X</text><text x="189" y="560" fill="#22e">Z</text></g>
        <g fill="#e6e6e6" stroke="#b9b9b9"><path d="m987 119 4 6h-8Z"/><path d="m987 203 4-6h-8Z"/><path d="m945 161 6-4v8Z"/><path d="m1030 161-6-4v8Z"/><path d="m1009 129 9 1-2 3q8 7 9 15l-3 1q-2-8-9-13l-3 3Z"/><path d="m1010 193 1-9 3 2q7-5 8-13l3 1q-1 9-8 15l2 3Z"/></g>
        <path d="M977 139q10-2 22 0 6 1 6 7l1 27q-1 7-7 8-11 2-22 0-7-1-8-8l1-27q1-6 7-7Z" fill="url(#viewcube)"/>
        <rect x="978" y="140" width="23" height="11" rx="3" fill="#f3f3f3"/>
        <rect x="976" y="160" width="25" height="20" rx="4" fill="#efefef"/>
        <path d="m986 143 3 6" stroke="#222" stroke-width="2"/>
        <text class="cube-face" x="980" y="176">前</text>
        <path d="m988 162 2-25" stroke="#2ddf2d"/><path d="m988 161 24 1" stroke="#f22"/><path d="m988 162 2 12" stroke="#22f"/>
        <g class="axis axis-lg"><text x="987" y="136" fill="#0e0">Y</text><text x="1016" y="166" fill="#f11">X</text><text class="axis-z" x="986" y="182" fill="#22e">Z</text></g>
      </svg>

      <button class="collapse" aria-label="收起侧栏"><svg><use href="#chevr"/></svg></button>

      <div class="viewbar">
        <button aria-label="缩放"><svg><use href="#zoom"/></svg></button>
        <button aria-label="适合窗口"><svg class="lg"><use href="#fit"/></svg></button>
        <button aria-label="显示样式"><svg class="lg"><use href="#cube"/></svg></button>
        <button class="cb" aria-label="显示样式选项"><svg class="chev"><use href="#chev"/></svg></button>
        <button class="on" aria-label="可见性"><svg class="lg"><use href="#eye"/></svg></button>
        <button class="cb" aria-label="可见性选项"><svg class="chev"><use href="#chev"/></svg></button>
        <button aria-label="剖切"><svg class="lg"><use href="#ring"/></svg></button>
        <button class="on" aria-label="着色"><svg><use href="#ycube"/></svg></button>
        <button aria-label="旋转"><svg class="lg"><use href="#rot"/></svg></button>
        <button aria-label="选择过滤"><svg class="lg"><use href="#fcur"/></svg></button>
        <button aria-label="显示器"><svg class="lg"><use href="#mon"/></svg></button>
        <button class="cb" aria-label="显示器选项"><svg class="chev"><use href="#chev"/></svg></button>
      </div>

      <button class="pop" aria-label="还原窗口"><svg><use href="#restore"/></svg></button>

      <form class="dialog" role="dialog" aria-labelledby="dlg">
        <div class="dialog-head"><h2 id="dlg">布尔运算</h2><span class="qm">?</span><button type="button" class="min" aria-label="最小化">–</button><button type="button" aria-label="弹出"><svg><use href="#restore"/></svg></button></div>
        <div class="dialog-tabs"><button type="button" class="on">合并</button><button type="button" disabled>减去</button><button type="button" disabled>相交</button></div>
        <div class="picks">
          <div class="picks-head"><span>工具</span><button type="button" aria-label="清空"><svg><use href="#trash"/></svg></button></div>
          <ul>
            <li>拉伸切除3<button type="button" aria-label="移除">×</button></li>
            <li>拉伸凸台/基体11<button type="button" aria-label="移除">×</button></li>
            <li>拉伸凸台/基体12<button type="button" aria-label="移除">×</button></li>
          </ul>
        </div>
        <div class="dialog-foot"><button type="button" class="ok">确定</button><button type="button">关闭</button></div>
      </form>
    </section>

    <nav class="rail">
      <button aria-label="文件"><svg><use href="#folder"/></svg></button>
      <button aria-label="属性"><svg><use href="#park"/></svg></button>
      <button aria-label="模型"><svg><use href="#poly3"/></svg></button>
      <button aria-label="工具"><svg><use href="#wrench"/></svg></button>
      <button aria-label="材质"><svg><use href="#checker"/></svg></button>
      <button aria-label="手册"><svg><use href="#book"/></svg></button>
    </nav>
    <div class="units"><select aria-label="单位"><option>MMGS</option></select><svg class="chev"><use href="#chev"/></svg></div>
  </main>
</div>
</body>
</html>
```
FILE: styles.css
```css
* { box-sizing: border-box; }
body { margin: 0; background: #fff; color: #444; font: 10px/14px "Open Sans", "Noto Sans CJK SC", sans-serif; }
button { display: flex; align-items: center; justify-content: center; padding: 0; border: 0; background: none; color: inherit; font: inherit; white-space: nowrap; }
ul { margin: 0; padding: 0; list-style: none; }
h1, h2 { margin: 0; }
svg { display: block; flex: none; }
.sprite { position: absolute; }
.chev { width: 10px; height: 10px; color: #444; }
.app { display: flex; flex-direction: column; min-height: 100vh; }

/* Top bar */
.topbar { display: flex; justify-content: space-between; height: 32px; padding: 0 6px 0 7px; border-bottom: 1px solid #eef0f2; }
.topbar-left, .topbar-right, .pair, .primary-group, .saved, .like, .user { display: flex; align-items: center; }
.topbar-left { gap: 9px; }
.topbar-right { gap: 14px; }
.brand { display: flex; align-items: center; width: 76px; color: #2a78c4; font-size: 15px; line-height: 20px; text-decoration: none; }
.brand-mark { width: 15px; height: 18px; }
.doc-title { color: #222; font-size: 13px; font-weight: 500; line-height: 17px; text-decoration: underline; text-underline-offset: 2px; }
.ib svg { width: 18px; height: 18px; }
.ib-wide svg { width: 20px; height: 20px; }
.ib-branch { width: 20px; }
.pair { gap: 7px; }
.pair .cb { width: 9px; }
.primary-group { gap: 6px; }
.primary { gap: 4px; height: 17px; padding: 0 7px; border-radius: 2px; background: #0b78d6; color: #fff; font-size: 9px; font-weight: 500; }
.primary .chev { width: 8px; height: 8px; color: #fff; }
.saved { gap: 5px; color: #888; font-size: 9px; }
.saved svg { width: 13px; height: 13px; }
.saved span { border-bottom: 1px solid #aaa; }
.feedback { width: 32px; height: 13px; border: 1px solid #777; border-radius: 2px; font-size: 9px; line-height: 11px; }
.like { gap: 3px; }
.like svg { width: 17px; height: 17px; }
.user { gap: 4px; }
.user-mark { width: 16px; height: 18px; }

/* Ribbon */
.ribbon { display: flex; height: 56px; border-bottom: 1px solid #eef0f2; }
.history { display: grid; grid-template-rows: 1fr 1fr; width: 55px; padding: 2px 0; border-right: 1px solid #e8eaec; }
.history button { justify-content: flex-start; gap: 4px; padding-left: 5px; }
.history svg { width: 20px; height: 18px; }
.draw-sketch { gap: 6px; width: 66px; border-right: 1px solid #e8eaec; }
.tools { display: grid; grid-template-columns: repeat(5, 47px); grid-template-rows: 28px 28px; padding-left: 12px; border-right: 1px solid #e8eaec; }
.tool { display: flex; align-items: center; gap: 8px; }
.tool svg { width: 20px; height: 20px; }
.tool .chev, .cmd .chev { width: 10px; height: 10px; }
.cmd { display: flex; align-items: center; padding: 0 9px; border-right: 1px solid #e8eaec; }
.cmd-menu { gap: 5px; padding: 0 7px 0 8px; }
.cmd-menu .cmd-btn { min-width: 44px; padding-top: 2px; }
.cmd-last { border: 0; }
.cmd-btn { flex-direction: column; gap: 4px; }
.cmd-btn svg { width: 20px; height: 20px; }
.var-mark { color: #222; font: bold 13px/20px "Liberation Serif", serif; }

/* Ribbon tabs */
.tabs { display: flex; height: 16px; border-bottom: 1px solid #e6e9ec; font-size: 9px; }
.tabs button { padding: 0 8px; border-right: 1px solid transparent; color: #555; }
.tabs .on { border-right-color: #e6e9ec; box-shadow: -1px 0 #e6e9ec; color: #111; font-weight: 500; }
.tabs .fold { margin-left: auto; }
.fold .chev { width: 11px; height: 11px; }

/* Workspace */
.workspace { position: relative; display: flex; flex: 1; }
.side { width: 156px; background: #fff; }
.side-tabs { display: grid; grid-template-columns: 1fr 1fr 1fr; height: 20px; }
.side-tabs button { background: #e9eaeb; }
.side-tabs .on { background: #fff; }
.side-tabs svg { width: 13px; height: 13px; }
.side-tabs .lg { width: 16px; height: 14px; }
.filter { display: flex; align-items: center; height: 22px; margin: 6px 6px 2px 5px; padding-left: 4px; border: 1px solid #e8eaec; border-radius: 2px; }
.filter svg { width: 10px; height: 12px; }
.filter input { flex: 1; min-width: 0; border: 0; outline: 0; background: none; }
.root { display: flex; align-items: center; gap: 6px; height: 24px; padding-left: 6px; color: #222; font-size: 11px; font-weight: 700; }
.root svg { width: 12px; height: 11px; }
.tree li { position: relative; display: flex; align-items: center; gap: 3px; height: 23px; padding-left: 22px; }
.tree li:nth-child(even) { height: 22px; }
.tree li > svg { width: 13px; height: 13px; }
.tree button { position: absolute; left: 9px; }
.tree button svg { width: 10px; height: 10px; }
.tree .dim { color: #a9adb1; }
.tree .picked { margin-right: 4px; border: 1px solid #8ab4d8; color: #c3c7cb; }
.doc-tab { gap: 5px; width: 112px; height: 21px; margin: 1px 0 0 2px; padding: 0 5px; border-bottom: 2px solid #5d9bd3; box-shadow: 0 0 3px #ccd2d8; font-size: 9px; font-weight: 500; }
.doc-tab svg { width: 11px; height: 9px; }
.doc-tab .doc-restore { width: 9px; height: 9px; margin-left: auto; }

.viewport { position: relative; flex: 1; box-shadow: inset 5px 0 4px -3px #f0f2f4; }
.scene { position: absolute; inset: 0; width: 100%; height: 100%; }
.plane-label { fill: #303c50; font-size: 9px; }
.axis { font: 10px "Open Sans", sans-serif; }
.axis-lg { font-size: 12px; }
.axis-z { font-weight: 600; }
.cube-face { fill: #222; font: 400 17px "Noto Sans CJK SC", sans-serif; }
.collapse { position: absolute; top: 186px; left: 0; width: 11px; height: 68px; background: #e3e8ec; clip-path: polygon(0 0, 100% 16%, 100% 84%, 0 100%); }
.collapse svg { width: 12px; height: 12px; transform: rotate(180deg); }
.viewbar { position: absolute; top: 5px; left: 222px; display: flex; gap: 1px; height: 31px; padding-right: 3px; border-radius: 3px; background: #e4e8ed; }
.viewbar button { width: 30px; }
.viewbar .cb { width: 14px; }
.viewbar .on { background: #d0dce7; }
.viewbar svg { width: 17px; height: 17px; }
.viewbar .lg { width: 20px; height: 19px; }
.viewbar .chev { width: 10px; height: 10px; }
.pop { position: absolute; top: 10px; right: 9px; }
.pop svg { width: 13px; height: 13px; }

/* Boolean dialog */
.dialog { position: absolute; top: 0; left: 32px; width: 182px; padding: 5px 5px 5px 5px; background: #fff; box-shadow: 0 2px 6px #8a8f94; font-size: 9px; }
.dialog-head { display: flex; align-items: center; gap: 5px; height: 18px; color: #333; }
.dialog-head h2 { font-size: 11px; line-height: 18px; }
.qm { width: 9px; height: 9px; border-radius: 50%; background: #444; color: #fff; font-size: 8px; font-weight: 700; line-height: 9px; text-align: center; }
.min { margin-left: auto; font-size: 16px; }
.dialog-head svg { width: 9px; height: 9px; margin-right: 2px; }
.dialog-tabs { display: grid; grid-template-columns: 1fr 1fr 1fr; gap: 7px; height: 25px; margin: 2px 3px 0; }
.dialog-tabs button { padding-top: 6px; border-bottom: 1px solid #edf0f2; color: #d3d5d7; }
.dialog-tabs .on { border-color: #2d8ae8; color: #1879dc; font-weight: 700; }
.picks { height: 90px; margin-top: 5px; padding: 1px 4px 0 7px; border: 1px solid #8faac6; border-radius: 2px; background: radial-gradient(circle at 0 0, #b020f0 7px, #d5e6fc 8px); }
.picks-head, .picks li { display: flex; align-items: center; justify-content: space-between; height: 21px; }
.picks-head svg { width: 10px; height: 11px; }
.picks li { padding: 0 9px 0 7px; }
.dialog-foot { display: flex; align-items: center; justify-content: flex-end; gap: 17px; margin-top: 12px; padding-right: 9px; }
.ok { width: 38px; height: 20px; border-radius: 2px; background: #0b78d6; color: #fff; font-weight: 500; }

/* Right rail */
.rail { display: flex; flex-direction: column; gap: 17px; width: 22px; margin-bottom: 22px; padding-top: 9px; background: #e2e6ee; }
.rail button { height: 14px; }
.rail svg { width: 14px; height: 14px; }
.units { position: absolute; right: 3px; bottom: 2px; display: flex; align-items: center; width: 105px; height: 20px; padding-right: 6px; background: #fff; box-shadow: 0 0 3px #d4d8dc; }
.units select { flex: 1; height: 20px; padding: 0 10px; border: 0; outline: 0; appearance: none; background: none; color: #555; font: inherit; }
.units .chev { color: #aaa; }
```
